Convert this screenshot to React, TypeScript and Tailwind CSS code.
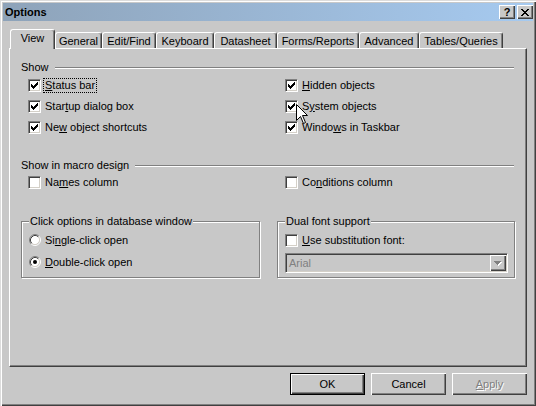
import React from 'react';

const raised = 'shadow-[inset_1px_1px_0_#ffffff,inset_-1px_-1px_0_#404040,inset_-2px_-2px_0_#808080]';

function Check({ checked }: { checked?: boolean }) {
  return (
    <span className="w-[13px] h-[13px] shrink-0 flex items-center justify-center bg-white border border-t-[#808080] border-l-[#808080] border-b-white border-r-white shadow-[inset_1px_1px_0_#404040,inset_-1px_-1px_0_#d4d0c8]">
      {checked && (
        <svg width="7" height="7" viewBox="0 0 7 7" shapeRendering="crispEdges">
          <path d="M0 2h1v3H0zM1 3h1v3H1zM2 4h1v3H2zM3 3h1v3H3zM4 2h1v3H4zM5 1h1v3H5zM6 0h1v3H6z" fill="#000" />
        </svg>
      )}
    </span>
  );
}

function Radio({ on }: { on?: boolean }) {
  return (
    <svg width="12" height="12" viewBox="0 0 12 12" className="shrink-0">
      <circle cx="6" cy="6" r="4.5" fill="#fff" />
      <path d="M2.11 9.89A5.5 5.5 0 0 1 9.89 2.11" stroke="#808080" fill="none" />
      <path d="M9.89 2.11A5.5 5.5 0 0 1 2.11 9.89" stroke="#ffffff" fill="none" />
      <path d="M2.82 9.18A4.5 4.5 0 0 1 9.18 2.82" stroke="#404040" fill="none" />
      <path d="M9.18 2.82A4.5 4.5 0 0 1 2.82 9.18" stroke="#d4d0c8" fill="none" />
      {on && <circle cx="6" cy="6" r="2" fill="#000" />}
    </svg>
  );
}

function Row({ checked, children }: { checked?: boolean; children: React.ReactNode }) {
  return (
    <div className="h-[21px] flex items-center gap-[4px]">
      <Check checked={checked} />
      <span>{children}</span>
    </div>
  );
}

function Heading({ text }: { text: string }) {
  return (
    <div className="ml-[11px] mr-[12px] h-[13px] flex items-center gap-[6px]">
      <span>{text}</span>
      <div className="flex-1 h-0 border-t border-t-[#808080] border-b border-b-white" />
    </div>
  );
}

function Group({ label, width, children }: { label: string; width: string; children: React.ReactNode }) {
  return (
    <div className={`relative ${width} h-[57px] border border-[#808080] shadow-[1px_1px_0_#ffffff,inset_1px_1px_0_#ffffff] pl-[7px] pt-[7px]`}>
      <span className="absolute -top-[7px] left-[7px] px-[1px] bg-[#c8c8c8] leading-[13px]">{label}</span>
      {children}
    </div>
  );
}

const tabs = [
  { name: 'View', w: 'w-[45px]' },
  { name: 'General', w: 'w-[47px]' },
  { name: 'Edit/Find', w: 'w-[54px]' },
  { name: 'Keyboard', w: 'w-[58px]' },
  { name: 'Datasheet', w: 'w-[63px]' },
  { name: 'Forms/Reports', w: 'w-[82px]' },
  { name: 'Advanced', w: 'w-[60px]' },
  { name: 'Tables/Queries', w: 'w-[84px]' },
];

export default function App() {
  return (
    <div className="relative w-[536px] h-[406px] bg-[#c8c8c8] p-[3px] text-[11px] leading-[13px] text-black font-['Liberation_Sans',Arial,sans-serif] shadow-[inset_1px_1px_0_#dcdcdc,inset_2px_2px_0_#ffffff,inset_-1px_-1px_0_#404040,inset_-2px_-2px_0_#808080] overflow-hidden select-none">
      {/* Title bar */}
      <div className="h-[18px] flex items-center justify-between pl-[2px] pr-[0px] bg-gradient-to-r from-[#8ea3b9] to-[#a6caf0]">
        <span className="font-bold text-[11px]">Options</span>
        <div className="flex gap-[2px]">
          <div className={`w-[16px] h-[14px] bg-[#c8c8c8] flex items-center justify-center font-bold text-[11px] leading-none ${raised}`}>?</div>
          <div className={`w-[16px] h-[14px] bg-[#c8c8c8] flex items-center justify-center ${raised}`}>
            <svg width="8" height="7" viewBox="0 0 8 7" shapeRendering="crispEdges">
              <path d="M0 0h2v1H0zM6 0h2v1H6zM1 1h2v1H1zM5 1h2v1H5zM2 2h4v1H2zM3 3h2v1H3zM2 4h4v1H2zM1 5h2v1H1zM5 5h2v1H5zM0 6h2v1H0zM6 6h2v1H6z" fill="#000" />
            </svg>
          </div>
        </div>
      </div>

      {/* Tabs */}
      <div className="relative z-10 mt-[8px] ml-[7px] h-[20px] flex items-end">
        {tabs.map((t, i) =>
          i === 0 ? (
            <div key={t.name} className={`${t.w} h-[20px] pt-[2px] text-center bg-[#c8c8c8] border-l border-t border-white border-r border-r-[#404040] rounded-t-[3px] shadow-[inset_-1px_0_0_#808080]`}>
              {t.name}
            </div>
          ) : (
            <div key={t.name} className={`${t.w} h-[16px] mb-[1px] pt-[2px] text-center border-l border-t border-white border-r border-r-[#404040] rounded-t-[3px] shadow-[inset_-1px_0_0_#808080]`}>
              {t.name}
            </div>
          )
        )}
      </div>

      {/* Panel */}
      <div className="-mt-[1px] ml-[6px] w-[518px] h-[319px] pt-[12px] border-l border-t border-white border-r border-b border-r-[#404040] border-b-[#404040] shadow-[inset_-1px_-1px_0_#808080]">
        <Heading text="Show" />
        <div className="mt-[1px] pl-[18px] grid grid-cols-[257px_1fr]">
          <div className="h-[21px] flex items-center gap-[4px]">
            <Check checked />
            <span className="-ml-[1px] px-[1px] outline-1 outline-dotted outline-black">
              <u>S</u>tatus bar
            </span>
          </div>
          <Row checked>
            <u>H</u>idden objects
          </Row>
          <Row checked>
            Star<u>t</u>up dialog box
          </Row>
          <Row checked>
            S<u>y</u>stem objects
          </Row>
          <Row checked>
            Ne<u>w</u> object shortcuts
          </Row>
          <Row checked>
            Windo<u>w</u>s in Taskbar
          </Row>
        </div>

        <div className="mt-[21px]">
          <Heading text="Show in macro design" />
        </div>
        <div className="pl-[18px] grid grid-cols-[257px_1fr]">
          <Row>
            Na<u>m</u>es column
          </Row>
          <Row>
            Co<u>n</u>ditions column
          </Row>
        </div>

        <div className="mt-[28px] ml-[11px] flex gap-[17px]">
          <Group label="Click options in database window" width="w-[239px]">
            <div className="h-[22px] flex items-center gap-[4px]">
              <Radio />
              <span>
                Si<u>n</u>gle-click open
              </span>
            </div>
            <div className="h-[22px] flex items-center gap-[4px]">
              <Radio on />
              <span>
                <u>D</u>ouble-click open
              </span>
            </div>
          </Group>
          <Group label="Dual font support" width="w-[238px]">
            <div className="h-[22px] flex items-center gap-[4px]">
              <Check />
              <span>
                <u>U</u>se substitution font:
              </span>
            </div>
            <div className="mt-[2px] w-[223px] h-[20px] flex items-center justify-between border border-t-[#808080] border-l-[#808080] border-b-white border-r-white shadow-[inset_1px_1px_0_#404040,inset_-1px_-1px_0_#d4d0c8] pl-[3px] pr-[1px]">
              <span className="text-[#808080]">Arial</span>
              <div className={`w-[16px] h-[16px] bg-[#c8c8c8] flex items-center justify-center ${raised}`}>
                <svg width="8" height="5" viewBox="0 0 8 5" shapeRendering="crispEdges">
                  <path d="M1 1h7v1H1zM2 2h5v1H2zM3 3h3v1H3zM4 4h1v1H4z" fill="#ffffff" />
                  <path d="M0 0h7v1H0zM1 1h5v1H1zM2 2h3v1H2zM3 3h1v1H3z" fill="#808080" />
                </svg>
              </div>
            </div>
          </Group>
        </div>
      </div>

      {/* Buttons */}
      <div className="mt-[6px] pr-[6px] flex justify-end gap-[6px]">
        <div className={`w-[75px] h-[22px] flex items-center justify-center border border-black ${raised}`}>OK</div>
        <div className={`w-[75px] h-[22px] flex items-center justify-center ${raised}`}>Cancel</div>
        <div className={`w-[75px] h-[22px] flex items-center justify-center text-[#808080] [text-shadow:1px_1px_0_#ffffff] ${raised}`}>
          <span>
            <u>A</u>pply
          </span>
        </div>
      </div>

      {/* Mouse cursor */}
      <svg className="absolute left-[296px] top-[104px]" width="13" height="21" viewBox="0 0 13 21">
        <path d="M0.5 0.5V16.5L4.5 12.5L7.5 19.5L9.5 18.5L6.5 11.5H11.5Z" fill="#fff" stroke="#000" strokeLinejoin="miter" />
      </svg>
    </div>
  );
}
